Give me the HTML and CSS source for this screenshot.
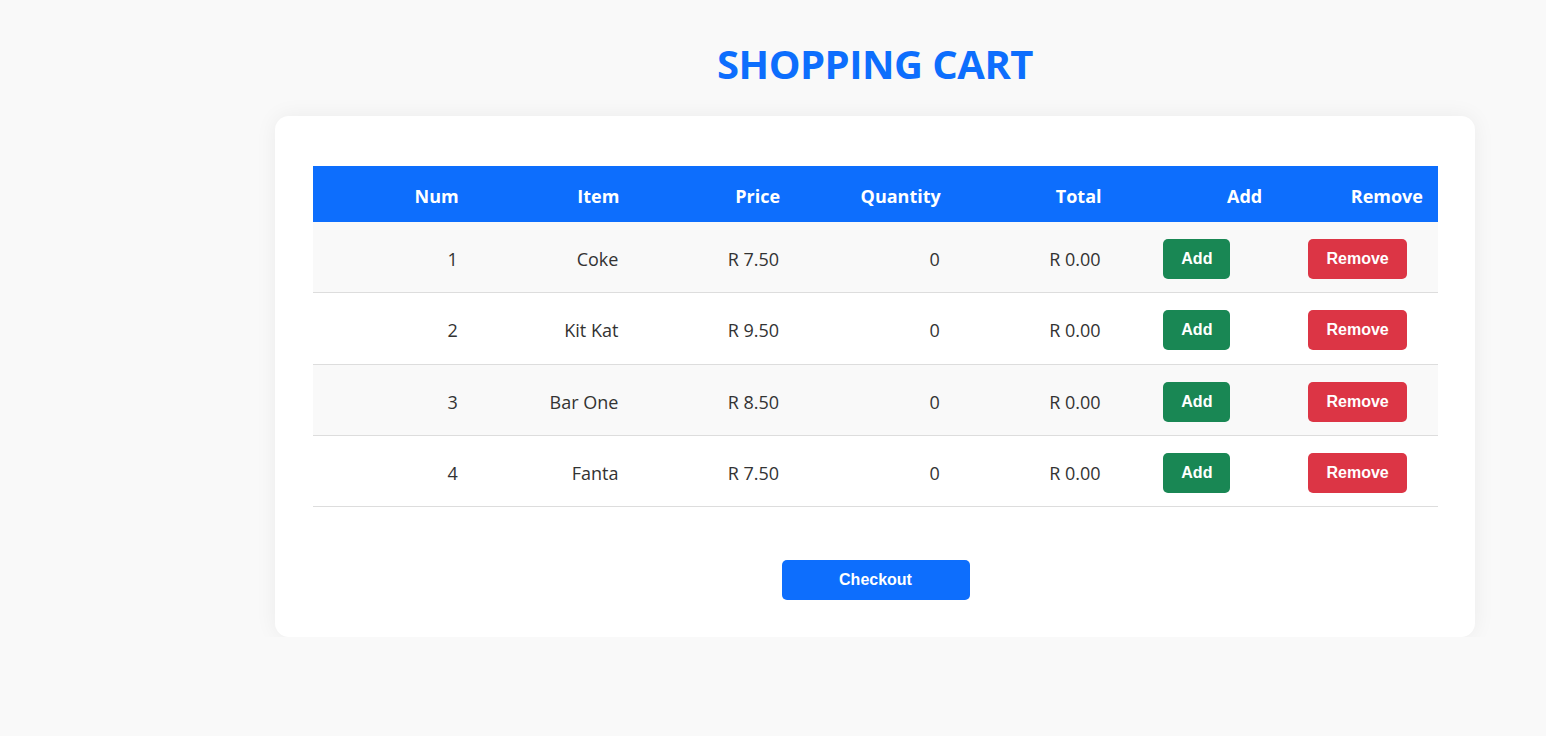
FILE: index.html
```html
<!DOCTYPE html>
<html lang="en">
<head>
<meta charset="utf-8">
<title>Shopping Cart</title>
<link rel="stylesheet" href="styles.css">
</head>
<body>
<div class="page">
  <h1 class="title">SHOPPING CART</h1>
  <div class="card">
    <table class="cart">
      <thead>
        <tr>
          <th>Num</th><th>Item</th><th>Price</th><th>Quantity</th><th>Total</th><th>Add</th><th>Remove</th>
        </tr>
      </thead>
      <tbody>
        <tr>
          <td>1</td><td>Coke</td><td>R 7.50</td><td>0</td><td>R 0.00</td>
          <td class="btn-cell"><button class="btn btn-add">Add</button></td>
          <td class="btn-cell"><button class="btn btn-remove">Remove</button></td>
        </tr>
        <tr>
          <td>2</td><td>Kit Kat</td><td>R 9.50</td><td>0</td><td>R 0.00</td>
          <td class="btn-cell"><button class="btn btn-add">Add</button></td>
          <td class="btn-cell"><button class="btn btn-remove">Remove</button></td>
        </tr>
        <tr>
          <td>3</td><td>Bar One</td><td>R 8.50</td><td>0</td><td>R 0.00</td>
          <td class="btn-cell"><button class="btn btn-add">Add</button></td>
          <td class="btn-cell"><button class="btn btn-remove">Remove</button></td>
        </tr>
        <tr>
          <td>4</td><td>Fanta</td><td>R 7.50</td><td>0</td><td>R 0.00</td>
          <td class="btn-cell"><button class="btn btn-add">Add</button></td>
          <td class="btn-cell"><button class="btn btn-remove">Remove</button></td>
        </tr>
      </tbody>
    </table>
    <div class="actions">
      <button class="btn btn-checkout">Checkout</button>
    </div>
  </div>
</div>
</body>
</html>
```
FILE: styles.css
```css
* { box-sizing: border-box; }
html, body {
  margin: 0;
  padding: 0;
  background: #f9f9f9;
}
body {
  font-family: "Open Sans", "Noto Sans", sans-serif;
  color: #333;
}
.page {
  width: 1200px;
  margin-left: 275px;
  padding-top: 36px;
}
.title {
  margin: 0 0 24px 0;
  text-align: center;
  color: #0d6efd;
  font-size: 40px;
  font-weight: 700;
  line-height: 56px;
  letter-spacing: -0.5px;
}
.card {
  background: #fff;
  border-radius: 14px;
  box-shadow: 0 0 22px rgba(0, 0, 0, 0.06);
  padding: 50px 37px 37px 38px;
}
.cart {
  width: 100%;
  border-collapse: collapse;
  table-layout: fixed;
  font-size: 18px;
}
.cart th {
  background: #0d6efd;
  color: #fff;
  font-weight: 700;
  text-align: right;
  padding: 17px 15px 13px 15px;
  line-height: 26px;
}
.cart td {
  text-align: right;
  padding: 17px 16px 13.25px 16px;
  line-height: 26px;
  border-bottom: 1px solid #ddd;
  color: #333;
}
.cart tbody tr:nth-child(odd) td {
  background: #f9f9f9;
}
.cart td.btn-cell {
  text-align: center;
}
.btn {
  font-family: "Liberation Sans", Arial, sans-serif;
  font-weight: 700;
  font-size: 16px;
  color: #fff;
  border: none;
  border-radius: 5px;
  height: 40px;
  padding: 0 18px;
  vertical-align: middle;
  cursor: pointer;
}
.btn-add { background: #198754; }
.btn-remove { background: #dc3545; }
.actions {
  display: flex;
  justify-content: center;
  margin-top: 53px;
}
.btn-checkout {
  background: #0d6efd;
  width: 188px;
}
```
